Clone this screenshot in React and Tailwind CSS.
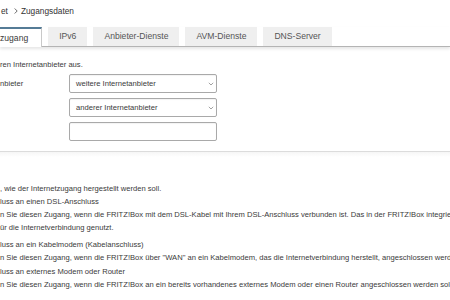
import React from "react";

const tabs = [
  { label: "zugang", active: true },
  { label: "IPv6" },
  { label: "Anbieter-Dienste" },
  { label: "AVM-Dienste" },
  { label: "DNS-Server" },
];

function Chevron({ className }) {
  return (
    <svg viewBox="0 0 6 4" className={className} fill="none">
      <path d="M0.8 0.8 L3 3 L5.2 0.8" stroke="#8a8a8a" strokeWidth="0.8" />
    </svg>
  );
}

function SelectBox({ value }) {
  return (
    <div className="h-[19px] w-[148px] rounded-[2px] border border-[#a9a9a9] bg-white flex items-center justify-between pl-[6px] pr-[2px] shadow-[inset_0_1px_1px_rgba(0,0,0,0.05)]">
      <span>{value}</span>
      <Chevron className="w-[6px] h-[4px]" />
    </div>
  );
}

function Option({ title, lines }) {
  return (
    <div>
      <div>{title}</div>
      {lines.map((l) => (
        <div key={l}>{l}</div>
      ))}
    </div>
  );
}

export default function App() {
  return (
    <div className="w-[450px] h-[300px] overflow-hidden bg-white text-[#3a3a3a] font-['Liberation_Sans',Arial,sans-serif] whitespace-nowrap">
      <div className="h-[22px] flex items-center text-[8.3px] text-[#333]">
        <span className="pl-[1px]">et</span>
        <svg viewBox="0 0 4 6" className="w-[4px] h-[6px] ml-[6px] mr-[3px]" fill="none">
          <path d="M0.7 0.5 L3.2 3 L0.7 5.5" stroke="#444" strokeWidth="0.8" />
        </svg>
        <span>Zugangsdaten</span>
      </div>

      <div className="mt-[5px] border-b border-[#b4b4b4] shadow-[0_2px_3px_rgba(0,0,0,0.10)]">
        <div className="flex gap-[6px] h-[19px] text-[8.6px]">
          {tabs.map((t) =>
            t.active ? (
              <div
                key={t.label}
                className="-mb-px h-[20px] bg-white border-t-[2px] border-t-[#557b96] border-r border-r-[#c9c9c9] flex items-center pr-[13px]"
              >
                {t.label}
              </div>
            ) : (
              <div
                key={t.label}
                className="h-[19px] bg-[#efefef] px-[11px] flex items-center text-[#555]"
              >
                {t.label}
              </div>
            )
          )}
        </div>
      </div>

      <div className="text-[7.6px] leading-[13px]">
        <div className="mt-[11px] h-[13px]">ren Internetanbieter aus.</div>

        <div className="mt-[3px] grid grid-cols-[69px_148px] gap-y-[5px] items-center">
          <div>nbieter</div>
          <SelectBox value="weitere Internetanbieter" />
          <div />
          <SelectBox value="anderer Internetanbieter" />
          <div />
          <div className="h-[19px] w-[148px] rounded-[2px] border border-[#a9a9a9] bg-white shadow-[inset_0_1px_1px_rgba(0,0,0,0.05)]" />
        </div>

        <div className="mt-[10px] border-t border-[#dcdcdc] h-[6px] bg-gradient-to-b from-[#f6f6f6] to-white" />

        <div className="mt-[25px]">, wie der Internetzugang hergestellt werden soll.</div>
        <Option
          title="luss an einen DSL-Anschluss"
          lines={[
            "n Sie diesen Zugang, wenn die FRITZ!Box mit dem DSL-Kabel mit Ihrem DSL-Anschluss verbunden ist. Das in der FRITZ!Box integrierte DSL-Modem wird",
            "ür die Internetverbindung genutzt.",
          ]}
        />
        <div className="mt-[4px]">
          <Option
            title="luss an ein Kabelmodem (Kabelanschluss)"
            lines={[
              "n Sie diesen Zugang, wenn die FRITZ!Box über \"WAN\" an ein Kabelmodem, das die Internetverbindung herstellt, angeschlossen werden soll.",
            ]}
          />
        </div>
        <div className="mt-[1px]">
          <Option
            title="luss an externes Modem oder Router"
            lines={[
              "n Sie diesen Zugang, wenn die FRITZ!Box an ein bereits vorhandenes externes Modem oder einen Router angeschlossen werden soll.",
            ]}
          />
        </div>
      </div>
    </div>
  );
}
